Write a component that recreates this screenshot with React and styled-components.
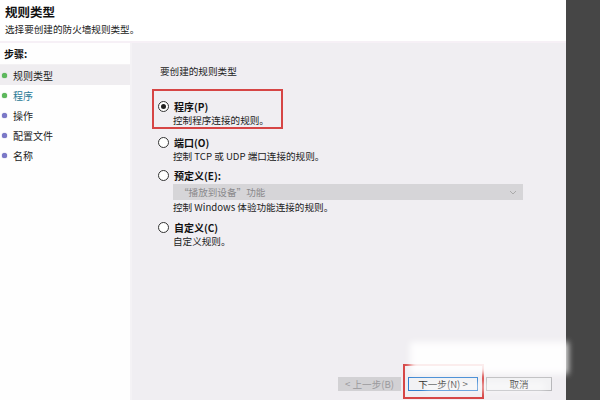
import React from "react";
import styled, { createGlobalStyle } from "styled-components";

const Global = createGlobalStyle`
  html, body { margin: 0; padding: 0; background: #464646; }
  body { font-family: "Noto Sans CJK SC", "Liberation Sans", sans-serif; }
`;

const Page = styled.div`
  width: 600px;
  height: 400px;
  display: flex;
  position: relative;
  overflow: hidden;
`;

const Main = styled.div`
  width: 566px;
  display: flex;
  flex-direction: column;
  background: #f0eef2;
`;

const DarkStrip = styled.div`
  flex: 1;
  background: #464646;
`;

const Header = styled.div`
  height: 43px;
  background: #ffffff;
  border-bottom: 2px solid #f6f0f6;
  padding: 4px 0 0 5px;
  box-sizing: border-box;
`;

const Title = styled.div`
  font-size: 12.5px;
  font-weight: bold;
  color: #111;
  line-height: 16px;
`;

const Subtitle = styled.div`
  font-size: 9.6px;
  color: #222;
  margin-top: 3px;
  line-height: 13px;
`;

const Body = styled.div`
  flex: 1;
  display: flex;
`;

const Sidebar = styled.div`
  width: 130px;
  background: #fefefe;
  border-right: 2px solid #f4f2f5;
  padding-top: 1px;
`;

const StepsLabel = styled.div`
  font-size: 10px;
  font-weight: bold;
  color: #111;
  padding: 2px 4px;
  height: 16px;
  line-height: 16px;
  border-bottom: 1px solid #f3f1f3;
`;

const Step = styled.div`
  display: flex;
  align-items: center;
  gap: 6px;
  height: 20px;
  padding-left: 2px;
  font-size: 10px;
  color: ${(p) => (p.$current ? "#2a7a96" : "#222")};
  background: ${(p) => (p.$selected ? "#efedf0" : "transparent")};
`;

const Dot = styled.span`
  width: 5px;
  height: 5px;
  border-radius: 50%;
  background: ${(p) => (p.$done ? "#5cb85c" : "#7a78c8")};
  box-shadow: 0 0 1px ${(p) => (p.$done ? "#3a9a3a" : "#5a58a8")};
`;

const Content = styled.div`
  flex: 1;
  display: flex;
  flex-direction: column;
  padding: 22px 14px 9px 20px;
`;

const Prompt = styled.div`
  font-size: 9.6px;
  color: #222;
  line-height: 13px;
  margin-left: 8px;
`;

const Highlight = styled.div`
  width: 131px;
  height: 40px;
  box-sizing: border-box;
  border: 2px solid #d64545;
  margin-top: 11px;
  padding: 9px 0 0 4px;
`;

const Option = styled.div`
  margin-top: ${(p) => p.$mt || 0}px;
  margin-left: ${(p) => p.$ml || 0}px;
`;

const OptionRow = styled.div`
  display: flex;
  align-items: center;
  gap: 5px;
  height: 13px;
`;

const Radio = styled.span`
  width: 9px;
  height: 9px;
  border-radius: 50%;
  border: 1px solid #333;
  background: #fff;
  display: flex;
  align-items: center;
  justify-content: center;
  &::after {
    content: "";
    width: 5px;
    height: 5px;
    border-radius: 50%;
    background: #222;
    display: ${(p) => (p.$checked ? "block" : "none")};
  }
`;

const OptionLabel = styled.span`
  font-size: 10px;
  font-weight: bold;
  color: #111;
  line-height: 13px;
`;

const Desc = styled.div`
  font-size: 9.6px;
  color: #222;
  line-height: 13px;
  margin-left: 15px;
  margin-top: 1px;
  font-family: "Noto Sans CJK SC", "Liberation Mono", monospace;
`;

const Select = styled.div`
  margin: 2px 0 0 15px;
  width: 350px;
  height: 16px;
  background: #d6d5d8;
  display: flex;
  align-items: center;
  justify-content: space-between;
  padding: 0 6px;
  box-sizing: border-box;
  font-size: 9.6px;
  color: #8a898c;
`;

const Footer = styled.div`
  margin-top: auto;
  display: flex;
  justify-content: flex-end;
  align-items: center;
  gap: 6px;
`;

const Button = styled.div`
  height: 14px;
  width: ${(p) => p.$w}px;
  box-sizing: border-box;
  font-size: 9.6px;
  line-height: 12px;
  display: flex;
  align-items: center;
  justify-content: center;
  color: ${(p) => (p.$disabled ? "#9a999c" : "#222")};
  background: ${(p) => (p.$disabled ? "#d2d1d4" : "#f2f2f4")};
  border: 1px solid ${(p) => (p.$primary ? "#2f7fd0" : p.$disabled ? "#d2d1d4" : "#b8b8bb")};
`;

const NextWrap = styled.div`
  border: 2px solid #d64545;
  padding: 11px 4px 6px 3px;
  margin: -13px -4px -8px -4px;
`;

const Watermark = styled.div`
  position: absolute;
  left: ${(p) => p.$x}px;
  top: ${(p) => p.$y}px;
  width: ${(p) => p.$w}px;
  height: ${(p) => p.$h}px;
  background: rgba(255, 255, 255, ${(p) => p.$a});
  filter: blur(3px);
`;

const steps = [
  { label: "规则类型", done: true, selected: true },
  { label: "程序", done: true, current: true },
  { label: "操作" },
  { label: "配置文件" },
  { label: "名称" },
];

export default function App() {
  return (
    <>
      <Global />
      <Page>
        <Main>
          <Header>
            <Title>规则类型</Title>
            <Subtitle>选择要创建的防火墙规则类型。</Subtitle>
          </Header>
          <Body>
            <Sidebar>
              <StepsLabel>步骤:</StepsLabel>
              {steps.map((s) => (
                <Step key={s.label} $selected={s.selected} $current={s.current}>
                  <Dot $done={s.done} />
                  {s.label}
                </Step>
              ))}
            </Sidebar>
            <Content>
              <Prompt>要创建的规则类型</Prompt>
              <Highlight>
                <OptionRow>
                  <Radio $checked />
                  <OptionLabel>程序(P)</OptionLabel>
                </OptionRow>
                <Desc>控制程序连接的规则。</Desc>
              </Highlight>
              <Option $mt={7} $ml={6}>
                <OptionRow>
                  <Radio />
                  <OptionLabel>端口(O)</OptionLabel>
                </OptionRow>
                <Desc>控制 TCP 或 UDP 端口连接的规则。</Desc>
              </Option>
              <Option $mt={6} $ml={6}>
                <OptionRow>
                  <Radio />
                  <OptionLabel>预定义(E):</OptionLabel>
                </OptionRow>
                <Select>
                  <span>“播放到设备”功能</span>
                  <svg width="8" height="5" viewBox="0 0 8 5">
                    <path d="M1 1 L4 4 L7 1" fill="none" stroke="#aaa" strokeWidth="1" />
                  </svg>
                </Select>
                <Desc>控制 Windows 体验功能连接的规则。</Desc>
              </Option>
              <Option $mt={7} $ml={6}>
                <OptionRow>
                  <Radio />
                  <OptionLabel>自定义(C)</OptionLabel>
                </OptionRow>
                <Desc>自定义规则。</Desc>
              </Option>
              <Footer>
                <Button $w={63} $disabled>
                  &lt; 上一步(B)
                </Button>
                <NextWrap>
                  <Button $w={70} $primary>
                    下一步(N) &gt;
                  </Button>
                </NextWrap>
                <Button $w={66}>取消</Button>
              </Footer>
            </Content>
          </Body>
        </Main>
        <DarkStrip />
        <Watermark $x={410} $y={342} $w={158} $h={32} $a={0.9} />
        <Watermark $x={425} $y={382} $w={120} $h={10} $a={0.45} />
      </Page>
    </>
  );
}
